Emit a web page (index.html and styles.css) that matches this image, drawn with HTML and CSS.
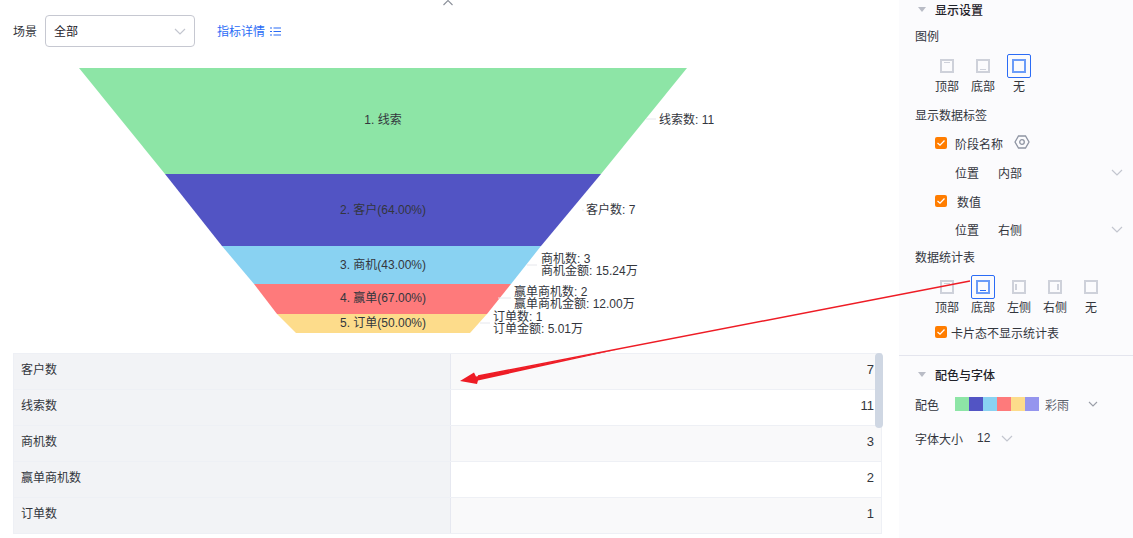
FILE: index.html
```html
<!DOCTYPE html>
<html lang="zh-CN">
<head>
    <meta charset="UTF-8">
    <title>漏斗图设置</title>
    <link rel="stylesheet" href="styles.css">
</head>
<body>
    <div class="page">
        <div class="main">
            <svg class="close-icon" width="12" height="6" viewBox="0 0 12 6"><path d="M1.5 -4L10.5 5M10.5 -4L1.5 5" fill="none" stroke="#8a8f99" stroke-width="1.1"/></svg>
            <div class="filter-bar">
                <span class="filter-label">场景</span>
                <div class="select">
                    <span>全部</span>
                    <svg width="12" height="7" viewBox="0 0 12 7"><path d="M1 1L6 6L11 1" fill="none" stroke="#c3c6cf" stroke-width="1.2"/></svg>
                </div>
                <a class="detail-link"><span>指标详情</span>
                    <svg width="11" height="9" viewBox="0 0 11 9"><path d="M0 1H2M0 4.5H2M0 8H2M3.5 1H11M3.5 4.5H11M3.5 8H11" fill="none" stroke="#2b6cf6" stroke-width="1.1"/></svg>
                </a>
            </div>

            <svg class="funnel" width="899" height="284" viewBox="0 68 899 284">
                <polygon points="79,68 687,68 601,174 165,174" fill="#8de5a6"/>
                <polygon points="165,174 601,174 541,246 222,246" fill="#5254c4"/>
                <polygon points="222,246 541,246 511,284 254,284" fill="#89d2f2"/>
                <polygon points="254,284 511,284 487,314 277,314" fill="#fe7a7b"/>
                <polygon points="277,314 487,314 470,333 296,333" fill="#fddc8b"/>
                <g fill="none" stroke="#e6e7ec">
                    <path d="M646 119H656M584 210H582M527 265H537M498 298H511M480 323H490"/>
                </g>
                <g class="funnel-text" text-anchor="middle">
                    <text x="383" y="124">1. 线索</text>
                    <text x="383" y="214">2. 客户(64.00%)</text>
                    <text x="383" y="269">3. 商机(43.00%)</text>
                    <text x="383" y="302">4. 赢单(67.00%)</text>
                    <text x="383" y="327">5. 订单(50.00%)</text>
                </g>
                <g class="funnel-text">
                    <text x="659" y="124">线索数: 11</text>
                    <text x="586" y="214">客户数: 7</text>
                    <text x="541" y="263">商机数: 3</text>
                    <text x="541" y="275">商机金额: 15.24万</text>
                    <text x="514" y="296">赢单商机数: 2</text>
                    <text x="514" y="308">赢单商机金额: 12.00万</text>
                    <text x="493" y="321">订单数: 1</text>
                    <text x="493" y="333">订单金额: 5.01万</text>
                </g>
            </svg>

            <div class="stats">
                <div class="stats-row"><div class="stats-name">客户数</div><div class="stats-value">7</div></div>
                <div class="stats-row"><div class="stats-name">线索数</div><div class="stats-value">11</div></div>
                <div class="stats-row"><div class="stats-name">商机数</div><div class="stats-value">3</div></div>
                <div class="stats-row"><div class="stats-name">赢单商机数</div><div class="stats-value">2</div></div>
                <div class="stats-row"><div class="stats-name">订单数</div><div class="stats-value">1</div></div>
                <div class="scrollbar"></div>
            </div>
        </div>

        <div class="side">
            <div class="section">
                <div class="section-title"><i class="caret"></i>显示设置</div>
                <div class="field-title">图例</div>
                <div class="pos-group">
                    <div class="pos-item"><div class="pos-box"><i class="pos-icon bar-top"></i></div>顶部</div>
                    <div class="pos-item"><div class="pos-box"><i class="pos-icon bar-bottom"></i></div>底部</div>
                    <div class="pos-item active"><div class="pos-box"><i class="pos-icon"></i></div>无</div>
                </div>
                <div class="field-title title-labels">显示数据标签</div>
                <div class="check-row">
                    <i class="check"><svg width="10" height="8" viewBox="0 0 10 8"><path d="M1.5 4L4 6.2L8.5 1.5" fill="none" stroke="#fff" stroke-width="1.3"/></svg></i>
                    <span>阶段名称</span>
                    <svg class="gear" width="16" height="14" viewBox="0 0 16 14"><path d="M1 7L4.5 1H11.5L15 7L11.5 13H4.5Z" fill="none" stroke="#8f95a3" stroke-width="1.3"/><circle cx="8" cy="7" r="2.3" fill="none" stroke="#8f95a3" stroke-width="1.3"/></svg>
                </div>
                <div class="pos-row"><span class="pos-key">位置</span><span>内部</span><svg width="12" height="7" viewBox="0 0 12 7"><path d="M1 1L6 6L11 1" fill="none" stroke="#c3c6cf" stroke-width="1.2"/></svg></div>
                <div class="check-row value-row">
                    <i class="check"><svg width="10" height="8" viewBox="0 0 10 8"><path d="M1.5 4L4 6.2L8.5 1.5" fill="none" stroke="#fff" stroke-width="1.3"/></svg></i>
                    <span class="value-label">数值</span>
                </div>
                <div class="pos-row"><span class="pos-key">位置</span><span>右侧</span><svg width="12" height="7" viewBox="0 0 12 7"><path d="M1 1L6 6L11 1" fill="none" stroke="#c3c6cf" stroke-width="1.2"/></svg></div>
                <div class="field-title title-stats">数据统计表</div>
                <div class="pos-group">
                    <div class="pos-item"><div class="pos-box"><i class="pos-icon bar-top"></i></div>顶部</div>
                    <div class="pos-item active"><div class="pos-box"><i class="pos-icon bar-bottom"></i></div>底部</div>
                    <div class="pos-item"><div class="pos-box"><i class="pos-icon bar-left"></i></div>左侧</div>
                    <div class="pos-item"><div class="pos-box"><i class="pos-icon bar-right"></i></div>右侧</div>
                    <div class="pos-item"><div class="pos-box"><i class="pos-icon"></i></div>无</div>
                </div>
                <div class="check-row card-row">
                    <i class="check"><svg width="10" height="8" viewBox="0 0 10 8"><path d="M1.5 4L4 6.2L8.5 1.5" fill="none" stroke="#fff" stroke-width="1.3"/></svg></i>
                    <span>卡片态不显示统计表</span>
                </div>
            </div>
            <div class="section section-color">
                <div class="section-title"><i class="caret"></i>配色与字体</div>
                <div class="color-row">
                    <span class="color-key">配色</span>
                    <div class="swatches">
                        <i style="background:#8de5a6"></i><i style="background:#5254c4"></i><i style="background:#89d2f2"></i><i style="background:#fe7a7b"></i><i style="background:#fddc8b"></i><i style="background:#9595ee"></i>
                    </div>
                    <span class="color-name">彩雨</span>
                    <svg width="10" height="6" viewBox="0 0 10 6"><path d="M1 1L5 5L9 1" fill="none" stroke="#9a9ea8" stroke-width="1.1"/></svg>
                </div>
                <div class="size-row">
                    <span class="size-key">字体大小</span>
                    <span class="size-value">12</span>
                    <svg width="12" height="7" viewBox="0 0 12 7"><path d="M1 1L6 6L11 1" fill="none" stroke="#c3c6cf" stroke-width="1.2"/></svg>
                </div>
            </div>
        </div>

        <svg class="arrow" width="1133" height="538" viewBox="0 0 1133 538">
            <path d="M970 281L478 376" fill="none" stroke="#ee1c25" stroke-width="1.5"/>
            <path d="M620 349L476 376.5L474 372.5L460 381L477 384L478 380.5Z" fill="#ee1c25"/>
        </svg>
    </div>
</body>
</html>
```

FILE: styles.css
```css
* { box-sizing: border-box; margin: 0; padding: 0; }
body { font-family: "Liberation Sans", "Noto Sans CJK SC", sans-serif; font-size: 12px; color: #33363d; background: #fff; overflow: hidden; }

.page { position: relative; display: flex; width: 1133px; height: 538px; overflow: hidden; }

.main { position: relative; width: 899px; height: 538px; }
.close-icon { position: absolute; left: 442px; top: 0; }

.filter-bar { display: flex; align-items: center; height: 32px; margin-top: 15px; padding-left: 13px; }
.filter-label { width: 32px; padding-bottom: 1px; }
.select { display: flex; align-items: center; justify-content: space-between; width: 150px; height: 32px; padding: 0 8px; border: 1px solid #c6c8d1; border-radius: 4px; color: #1d2129; }
.select span, .detail-link span { padding-bottom: 1px; }
.detail-link { display: flex; align-items: center; gap: 5px; margin-left: 22px; color: #2b6cf6; }

.funnel { display: block; margin-top: 21px; }
.funnel-text text { font-family: "Liberation Sans", "Noto Sans CJK SC", sans-serif; font-size: 12px; fill: #33363d; }

.stats { position: relative; width: 869px; margin: 1px 0 0 13px; border: 1px solid #eef0f5; border-top: 0; }
.stats-row { display: flex; height: 36px; border-top: 1px solid #eef0f5; background: #fff; }
.stats-row:nth-child(odd) { background: #f9f9fa; }
.stats-name { width: 437px; padding: 0 7px; line-height: 33px; background: #f2f3f6; border-right: 1px solid #e6e8f0; }
.stats-value { flex: 1; padding-right: 7px; line-height: 31px; text-align: right; font-size: 13px; }
.scrollbar { position: absolute; top: 0; right: -2px; width: 8px; height: 75px; background: #cfd7e3; border-radius: 4px; }

.side { width: 234px; height: 538px; background: #fbfbfd; }
.section { padding: 0 0 0 16px; border-bottom: 1px solid #e4e5ee; height: 357px; }
.section-color { border-bottom: 0; height: auto; padding-top: 8px; }
.section-title { display: flex; align-items: center; height: 20px; font-weight: 500; color: #1f2229; }
.section:first-child .section-title { margin-top: -1px; }
.caret { width: 0; height: 0; margin: 0 9px 0 3px; border: 4px solid transparent; border-top: 5px solid #b9bcc6; border-bottom: 0; }

.field-title { margin-top: 9px; height: 18px; line-height: 18px; }
.title-labels { margin-top: 12px; }
.title-stats { margin-top: 11px; }

.pos-group { display: flex; margin: 8px 0 0 14px; }
.pos-item { width: 36px; text-align: center; line-height: 16px; }
.pos-box { display: flex; align-items: center; justify-content: center; width: 24px; height: 24px; margin: 0 auto 1px; border: 1px solid transparent; border-radius: 2px; }
.pos-icon { position: relative; display: block; width: 14px; height: 14px; border: 2px solid #ced1da; }
.pos-icon::after { content: ""; position: absolute; background: #ced1da; }
.bar-top::after { left: 2px; right: 2px; top: 1px; height: 1px; }
.bar-bottom::after { left: 2px; right: 2px; bottom: 1px; height: 1px; }
.bar-left::after { left: 1px; top: 2px; bottom: 2px; width: 2px; }
.bar-right::after { right: 1px; top: 2px; bottom: 2px; width: 2px; }
.active .pos-box { border-color: #2b6cf6; }
.active .pos-icon { border-color: #6b9cf8; }
.active .pos-icon::after { background: #2b6cf6; }

.check-row { display: flex; align-items: center; height: 18px; margin: 9px 0 0 20px; }
.value-row { margin-top: 11px; }
.check { display: flex; align-items: center; justify-content: center; width: 12px; height: 12px; margin-right: 8px; background: #ff7d00; border-radius: 2px; }
.gear { margin-left: 11px; margin-top: -3px; }
.value-label { margin-left: 2px; }
.card-row { margin-top: 7px; }
.card-row .check { margin-right: 4px; }

.pos-row { display: flex; align-items: center; height: 18px; margin: 11px 0 0 40px; }
.value-row + .pos-row { margin-top: 10px; }
.pos-key { width: 43px; }
.pos-row svg { margin-left: auto; margin-right: 10px; }

.color-row { display: flex; align-items: center; height: 18px; margin-top: 11px; }
.color-key { width: 40px; }
.swatches { display: flex; }
.swatches i { display: block; width: 14px; height: 14px; }
.color-name { margin: 0 19px 0 6px; color: #5f636d; }
.size-row { display: flex; align-items: center; height: 18px; margin-top: 16px; }
.size-key { width: 62px; }
.size-value { width: 24px; }

.arrow { position: absolute; left: 0; top: 0; pointer-events: none; }
```
